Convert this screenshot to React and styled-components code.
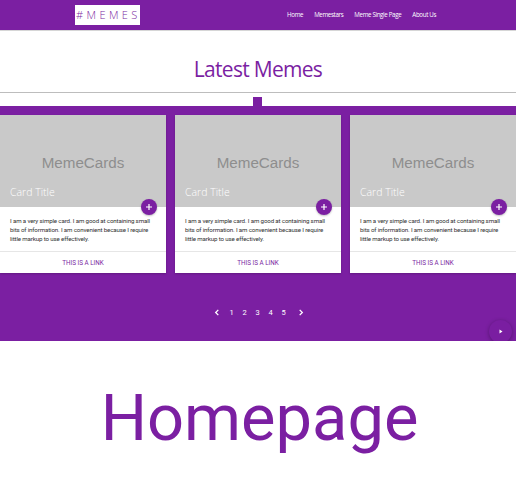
import React from "react";
import styled, { createGlobalStyle } from "styled-components";

const PURPLE = "#7b1fa2";

const Global = createGlobalStyle`
  html, body { margin: 0; padding: 0; background: #fff; }
  body { font-family: Roboto, "Liberation Sans", sans-serif; width: 516px; overflow-x: hidden; }
  * { box-sizing: border-box; }
`;

const Nav = styled.nav`
  height: 31px;
  background: ${PURPLE};
  border-bottom: 1px solid #d6d6d6;
  display: flex;
  align-items: center;
  justify-content: space-between;
  padding: 0 80px 0 75px;
`;

const Logo = styled.div`
  background: #fff;
  color: ${PURPLE};
  height: 20px;
  width: 65px;
  margin-top: -1px;
  font-family: "Open Sans", sans-serif;
  font-size: 11px;
  font-weight: 300;
  letter-spacing: 3.4px;
  line-height: 20px;
  padding-left: 1px;
  white-space: nowrap;
`;

const Links = styled.div`
  display: flex;
  gap: 11px;
  margin-top: -1px;
`;

const NavLink = styled.a`
  color: #fff;
  font-family: "Open Sans", sans-serif;
  font-size: 6.2px;
  letter-spacing: -0.35px;
  text-decoration: none;
`;

const Header = styled.header`
  height: 62px;
  display: flex;
  align-items: center;
  justify-content: center;
  border-bottom: 1px solid #bdbdbd;
`;

const Title = styled.h1`
  margin: 15px 0 0;
  color: ${PURPLE};
  font-family: "Open Sans", sans-serif;
  font-weight: 400;
  font-size: 21px;
  letter-spacing: -0.7px;
`;

const MarkerStrip = styled.div`
  height: 13px;
  display: flex;
  justify-content: center;
  align-items: flex-end;
`;

const Marker = styled.div`
  width: 9px;
  height: 9px;
  background: ${PURPLE};
  margin-left: -1px;
`;

const Band = styled.section`
  position: relative;
  background: ${PURPLE};
  height: 235px;
  padding-top: 9px;
  overflow: hidden;
`;

const CardRow = styled.div`
  display: flex;
  gap: 9px;
  width: 540px;
`;

const Card = styled.div`
  flex: 0 0 166px;
  background: #fff;
  height: 158px;
  display: flex;
  flex-direction: column;
  box-shadow: 0 1px 2px rgba(0,0,0,0.2);
`;

const CardImage = styled.div`
  position: relative;
  height: 92px;
  background: #c9c9c9;
  display: flex;
  align-items: center;
  justify-content: center;
`;

const ImageText = styled.div`
  color: #8e8e8e;
  font-family: "Liberation Sans", Arial, sans-serif;
  font-size: 15.2px;
  font-weight: 400;
  margin-top: 2px;
`;

const CardTitle = styled.span`
  position: absolute;
  left: 10px;
  bottom: 8px;
  color: #fff;
  font-family: "Open Sans", sans-serif;
  font-weight: 300;
  font-size: 10.5px;
`;

const Fab = styled.button`
  position: absolute;
  right: 9px;
  bottom: -8px;
  width: 16px;
  height: 16px;
  border-radius: 50%;
  border: none;
  padding: 0;
  background: ${PURPLE};
  color: #fff;
  display: flex;
  align-items: center;
  justify-content: center;
  box-shadow: 0 1px 2px rgba(0,0,0,0.25);
`;

const CardContent = styled.div`
  height: 45px;
  padding: 10px 16px 0 10px;
  font-family: Roboto, sans-serif;
  font-size: 6.2px;
  letter-spacing: -0.15px;
  line-height: 9px;
  color: #333;
  border-bottom: 1px solid #e6e6e6;
`;

const CardAction = styled.a`
  flex: 1;
  display: flex;
  align-items: center;
  justify-content: center;
  color: ${PURPLE};
  font-family: Roboto, sans-serif;
  font-size: 6.3px;
  text-transform: uppercase;
  text-decoration: none;
  padding-top: 1px;
`;

const Pager = styled.div`
  position: absolute;
  left: 0;
  right: 0;
  top: 202px;
  display: flex;
  justify-content: center;
  align-items: center;
  padding-left: 3px;
`;

const PageItem = styled.span`
  width: 13px;
  color: #fff;
  font-family: Roboto, sans-serif;
  font-size: 7.5px;
  display: flex;
  justify-content: center;
  align-items: center;
`;

const Chevron = styled(PageItem)`
  width: ${(p) => p.$w}px;
`;

const CornerFab = styled.button`
  position: absolute;
  right: 4px;
  bottom: -2px;
  width: 23px;
  height: 23px;
  border-radius: 50%;
  border: none;
  padding: 0;
  background: #7a1ea1;
  box-shadow: 0 1px 4px rgba(0,0,0,0.3);
  display: flex;
  align-items: center;
  justify-content: center;
`;

const Hero = styled.section`
  height: 159px;
  display: flex;
  justify-content: center;
  align-items: flex-start;
`;

const HeroText = styled.h2`
  margin: 42px 0 0 3px;
  color: ${PURPLE};
  font-family: Roboto, sans-serif;
  font-weight: 400;
  font-size: 65px;
  letter-spacing: 0px;
  line-height: 1.1;
`;

const ChevronIcon = ({ dir }) => (
  <svg width="6" height="7" viewBox="0 0 6 8">
    <path
      d={dir === "left" ? "M4.5 1 L1.5 4 L4.5 7" : "M1.5 1 L4.5 4 L1.5 7"}
      fill="none"
      stroke="#fff"
      strokeWidth="1.5"
    />
  </svg>
);

const cards = [0, 1, 2];

export default function App() {
  return (
    <>
      <Global />
      <Nav>
        <Logo>#MEMES</Logo>
        <Links>
          <NavLink>Home</NavLink>
          <NavLink>Memestars</NavLink>
          <NavLink>Meme Single Page</NavLink>
          <NavLink>About Us</NavLink>
        </Links>
      </Nav>
      <Header>
        <Title>Latest Memes</Title>
      </Header>
      <MarkerStrip>
        <Marker />
      </MarkerStrip>
      <Band>
        <CardRow>
          {cards.map((i) => (
            <Card key={i}>
              <CardImage>
                <ImageText>MemeCards</ImageText>
                <CardTitle>Card Title</CardTitle>
                <Fab>
                  <svg width="8" height="8" viewBox="0 0 8 8">
                    <path d="M4 1 V7 M1 4 H7" stroke="#fff" strokeWidth="1.2" />
                  </svg>
                </Fab>
              </CardImage>
              <CardContent>
                I am a very simple card. I am good at containing small bits of
                information. I am convenient because I require little markup to
                use effectively.
              </CardContent>
              <CardAction>This is a link</CardAction>
            </Card>
          ))}
        </CardRow>
        <Pager>
          <Chevron $w={17}>
            <ChevronIcon dir="left" />
          </Chevron>
          <PageItem>1</PageItem>
          <PageItem>2</PageItem>
          <PageItem>3</PageItem>
          <PageItem>4</PageItem>
          <PageItem>5</PageItem>
          <Chevron $w={21}>
            <ChevronIcon dir="right" />
          </Chevron>
        </Pager>
        <CornerFab>
          <svg width="4" height="5" viewBox="0 0 4 5">
            <path d="M0.5 0.5 L3.5 2.5 L0.5 4.5 Z" fill="#fff" />
          </svg>
        </CornerFab>
      </Band>
      <Hero>
        <HeroText>Homepage</HeroText>
      </Hero>
    </>
  );
}
